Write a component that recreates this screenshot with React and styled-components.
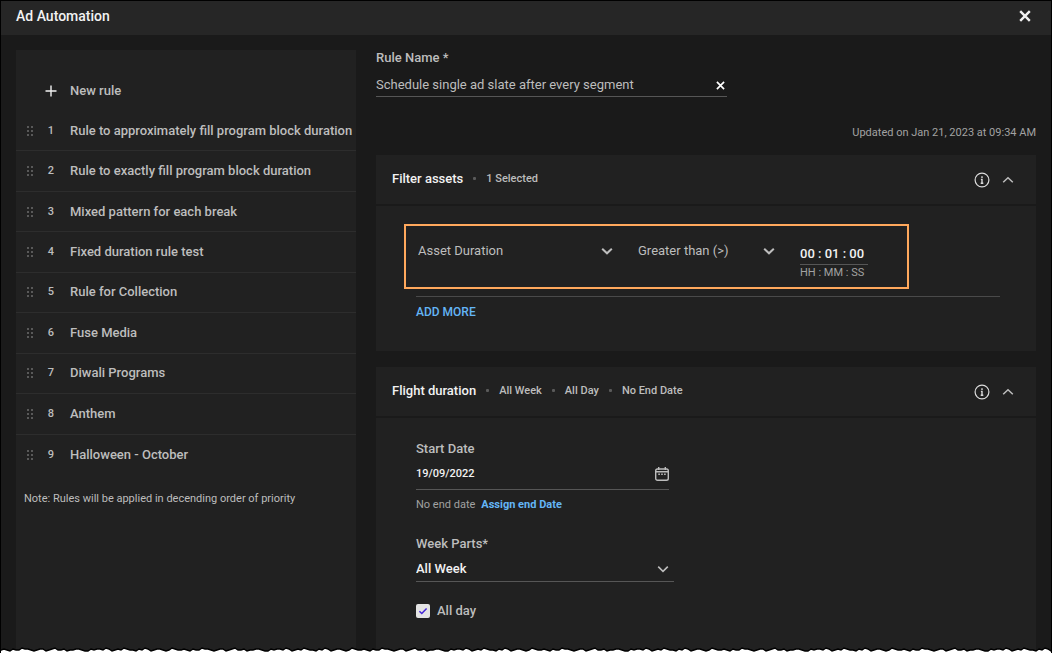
import { useState } from 'react';
import styled, { createGlobalStyle, css } from 'styled-components';

const GlobalStyle = createGlobalStyle`
  :root {
    --color-page: #1a1a1a;
    --color-header: #262626;
    --color-card: #212121;
    --color-line: #2d2d2d;
    --color-underline: #565656;
    --color-white: #f2f2f2;
    --color-text: #bdbdbd;
    --color-muted: #a2a2a2;
    --color-blue: #64b5f6;
    --color-orange: #ffa85c;
  }

  *, *::before, *::after {
    box-sizing: border-box;
    margin: 0;
    padding: 0;
  }

  body {
    background-color: var(--color-page);
    color: var(--color-text);
    font-family: Roboto, 'Liberation Sans', sans-serif;
    font-size: 13px;
    line-height: 16px;
  }

  button, input, select {
    font: inherit;
    color: inherit;
    background: none;
    border: none;
    border-radius: 0;
    outline: none;
  }

  button {
    cursor: pointer;
  }
`;

const rules = [
  'Rule to approximately fill program block duration',
  'Rule to exactly fill program block duration',
  'Mixed pattern for each break',
  'Fixed duration rule test',
  'Rule for Collection',
  'Fuse Media',
  'Diwali Programs',
  'Anthem',
  'Halloween - October',
];

const tear = [
  3, 4, 3, 2, 4, 3, 3, 5, 4, 4, 3, 2, 3, 4, 4, 2, 3, 4, 5, 3, 3, 4, 2, 3, 3, 4,
  4, 3, 2, 2, 4, 3, 4, 4, 3, 5, 4, 2, 3, 4, 3, 5, 4, 3, 3, 2, 4, 3, 5, 4, 2, 3,
  4, 4, 3, 2, 3, 5, 4, 3,
];

const Page = styled.div`
  position: relative;
  min-height: 100vh;
  display: flex;
  flex-direction: column;
  border: 1px solid #000;
  border-bottom: none;
`;

const Header = styled.header`
  height: 34px;
  padding: 0 20px 4px 15px;
  display: flex;
  align-items: center;
  justify-content: space-between;
  background-color: var(--color-header);
`;

const Title = styled.h1`
  color: var(--color-white);
  font-size: 14px;
  font-weight: 500;
`;

const IconButton = styled.button`
  display: flex;
  align-items: center;
  justify-content: center;
  color: ${props => props.$color || 'var(--color-text)'};
`;

const Layout = styled.div`
  flex: 1;
  padding: 15px 15px 0;
  display: flex;
  gap: 20px;
`;

const Sidebar = styled.aside`
  flex: 0 0 340px;
  padding-top: 21px;
  background-color: var(--color-card);
`;

const ruleGrid = css`
  width: 100%;
  display: grid;
  grid-template-columns: 28px 14px 1fr;
  align-items: center;
  justify-items: center;
`;

const NewRule = styled.button`
  ${ruleGrid}
  height: 40px;
  color: var(--color-white);

  svg {
    grid-column: 2;
  }
`;

const RuleList = styled.ol`
  height: 364px;
  display: grid;
  grid-auto-rows: 1fr;
  list-style: none;
`;

const RuleRow = styled.li`
  ${ruleGrid}
  border-bottom: 1px solid var(--color-line);

  &:last-child {
    border-bottom: none;
  }
`;

const RuleNumber = styled.span`
  font-size: 11px;
  font-weight: 500;
`;

const RuleName = styled.span`
  padding-left: 12px;
  justify-self: start;
  color: var(--color-text);
  font-weight: 500;
  white-space: nowrap;
`;

const Note = styled.p`
  padding: 16px 8px;
  font-size: 11px;
`;

const Main = styled.main`
  flex: 1;
  min-width: 0;
  display: flex;
  flex-direction: column;
`;

const Label = styled.label`
  display: block;
  font-weight: 500;
`;

const Field = styled.div`
  width: ${props => props.$width};
  height: ${props => props.$height};
  padding-top: ${props => props.$top || 0};
  display: flex;
  align-items: center;
  justify-content: space-between;
  border-bottom: 1px solid var(--color-underline);
`;

const TextInput = styled.input`
  flex: 1;
  min-width: 0;
  font-size: ${props => props.$size || '13px'};
  font-weight: ${props => props.$weight || 400};
  color: ${props => props.$color || 'var(--color-text)'};
`;

const ClearButton = styled(IconButton)`
  width: 14px;
  height: 14px;
`;

const Updated = styled.p`
  padding: 28px 0 14px;
  color: var(--color-muted);
  font-size: 11px;
  text-align: right;
`;

const Card = styled.section`
  display: flex;
  flex-direction: column;
  flex: ${props => (props.$grow ? 1 : 'none')};
  margin-bottom: ${props => (props.$grow ? 0 : '16px')};
`;

const CardHeader = styled.div`
  height: 49px;
  padding: 0 22px 0 16px;
  display: flex;
  align-items: center;
  gap: 10px;
  background-color: var(--color-card);
`;

const CardTitle = styled.h2`
  padding-bottom: 2px;
  color: var(--color-white);
  font-size: 13px;
  font-weight: 500;
`;

const Tag = styled.span`
  padding-bottom: 2px;
  display: flex;
  align-items: center;
  gap: 10px;
  font-size: 11px;
  font-weight: 500;

  &::before {
    content: '';
    width: 3px;
    height: 3px;
    border-radius: 1px;
    background-color: #5a5a5a;
  }
`;

const Actions = styled.div`
  margin-left: auto;
  display: flex;
  align-items: center;
  gap: 12px;
`;

const CardBody = styled.div`
  flex: 1;
  margin-top: 2px;
  padding: ${props => props.$padding};
  background-color: var(--color-card);
`;

const FilterRow = styled.div`
  max-width: 505px;
  height: 65px;
  padding: 17px 0 0 12px;
  display: flex;
  align-items: flex-start;
  gap: 25px;
  border: 2px solid var(--color-orange);
`;

const SelectBox = styled.div`
  width: ${props => props.$width};
  display: grid;
  align-items: center;

  select, svg {
    grid-area: 1 / 1;
  }

  select {
    width: 100%;
    height: 16px;
    appearance: none;
    font-weight: ${props => props.$weight || 400};
    color: ${props => props.$color || 'var(--color-text)'};
  }

  svg {
    justify-self: end;
    pointer-events: none;
  }
`;

const TimeBox = styled.div`
  width: 68px;
`;

const Hint = styled.span`
  display: block;
  color: var(--color-muted);
  font-size: 11px;
`;

const Divider = styled.hr`
  margin: 7px 24px 7px 12px;
  border: none;
  border-top: 1px solid #4a4a4a;
`;

const LinkButton = styled.button`
  display: block;
  margin-left: ${props => props.$indent || 0};
  color: var(--color-blue);
  font-size: 12px;
  font-weight: 500;
  line-height: 16px;
`;

const EndDate = styled.p`
  padding: 7px 0 23px;
  display: flex;
  gap: 6px;
  color: var(--color-muted);
  font-size: 11px;

  button {
    font-size: 11px;
    font-weight: 700;
  }
`;

const CheckRow = styled.div`
  padding: 21px 0 32px;
  display: flex;
  align-items: center;
  gap: 7px;
`;

const CheckBox = styled.span`
  display: grid;
  place-items: center;

  input, svg {
    grid-area: 1 / 1;
  }

  input {
    width: 14px;
    height: 14px;
    appearance: none;
    border-radius: 2px;
    background-color: #e4e4e4;
  }

  svg {
    pointer-events: none;
  }
`;

const TornEdge = styled.svg`
  position: absolute;
  left: 0;
  bottom: 0;
  width: 100%;
  height: 7px;
`;

function Cross({ size, weight }) {
  return (
    <svg width={size} height={size} viewBox="0 0 12 12" aria-hidden="true">
      <path d="M1.2 1.2 10.8 10.8M10.8 1.2 1.2 10.8" stroke="currentColor" strokeWidth={weight} />
    </svg>
  );
}

function Chevron({ up, width = 12, weight = 2 }) {
  return (
    <svg width={width} height="8" viewBox="0 0 12 8" fill="none" aria-hidden="true">
      <path
        d={up ? 'M1.2 6.3 6 1.7l4.8 4.6' : 'M1.2 1.7 6 6.3l4.8-4.6'}
        stroke="currentColor"
        strokeWidth={weight}
      />
    </svg>
  );
}

function Grip() {
  return (
    <svg width="8" height="12" viewBox="0 0 8 12" fill="#595959" aria-hidden="true">
      {[1, 5, 9].map(y => (
        <g key={y}>
          <rect x="1" y={y} width="2" height="2" />
          <rect x="5" y={y} width="2" height="2" />
        </g>
      ))}
    </svg>
  );
}

function InfoIcon() {
  return (
    <svg width="16" height="16" viewBox="0 0 16 16" fill="none" stroke="currentColor" aria-hidden="true">
      <circle cx="8" cy="8" r="6.9" strokeWidth="1.2" />
      <path d="M8 4.2v1.8M6.9 7.4H8v3.6M6.7 11.2h2.6" strokeWidth="1.4" />
    </svg>
  );
}

function CalendarIcon() {
  return (
    <svg width="14" height="14" viewBox="0 0 14 14" fill="none" stroke="currentColor" aria-hidden="true">
      <rect x="0.7" y="2" width="12.6" height="11.3" rx="1.8" strokeWidth="1.4" />
      <path d="M1 4.8h12M3.7 0v3M10.3 0v3" strokeWidth="1.4" />
      <path d="M3.3 7.3h1.6M6.2 7.3h1.6M9.1 7.3h1.6" strokeWidth="1.6" />
    </svg>
  );
}

function CardHead({ title, tags }) {
  return (
    <CardHeader>
      <CardTitle>{title}</CardTitle>
      {tags.map(tag => (
        <Tag key={tag}>{tag}</Tag>
      ))}
      <Actions>
        <IconButton type="button" aria-label={`About ${title}`} $color="#dcdcdc">
          <InfoIcon />
        </IconButton>
        <IconButton type="button" aria-label={`Collapse ${title}`}>
          <Chevron up weight={1.5} />
        </IconButton>
      </Actions>
    </CardHeader>
  );
}

function Tear() {
  const line = tear.map((h, i) => `L${i * 3} ${7 - h}`).join('');

  return (
    <TornEdge aria-hidden="true">
      <defs>
        <pattern id="tear" width="180" height="7" patternUnits="userSpaceOnUse">
          <path d={`M-3 9${line}L183 4V9Z`} fill="#fff" stroke="#000" strokeWidth="1.4" />
        </pattern>
      </defs>
      <rect width="100%" height="7" fill="url(#tear)" />
    </TornEdge>
  );
}

function App() {
  const [name, setName] = useState('Schedule single ad slate after every segment');
  const [allDay, setAllDay] = useState(true);

  return (
    <>
      <GlobalStyle />
      <Page>
        <Header>
          <Title>Ad Automation</Title>
          <IconButton type="button" aria-label="Close" $color="var(--color-white)">
            <Cross size={12} weight={2.4} />
          </IconButton>
        </Header>
        <Layout>
          <Sidebar>
            <NewRule type="button">
              <svg width="12" height="12" viewBox="0 0 12 12" aria-hidden="true">
                <path d="M6 0.5v11M0.5 6h11" stroke="currentColor" strokeWidth="1.4" />
              </svg>
              <RuleName>New rule</RuleName>
            </NewRule>
            <RuleList>
              {rules.map((rule, i) => (
                <RuleRow key={rule}>
                  <Grip />
                  <RuleNumber>{i + 1}</RuleNumber>
                  <RuleName>{rule}</RuleName>
                </RuleRow>
              ))}
            </RuleList>
            <Note>Note: Rules will be applied in decending order of priority</Note>
          </Sidebar>
          <Main>
            <Label htmlFor="rule-name">Rule Name *</Label>
            <Field $width="351px" $height="31px" $top="8px">
              <TextInput id="rule-name" value={name} onChange={e => setName(e.target.value)} />
              <ClearButton type="button" aria-label="Clear name" $color="#fff" onClick={() => setName('')}>
                <Cross size={9} weight={2.2} />
              </ClearButton>
            </Field>
            <Updated>Updated on Jan 21, 2023 at 09:34 AM</Updated>

            <Card>
              <CardHead title="Filter assets" tags={['1 Selected']} />
              <CardBody $padding="18px 12px 31px 28px">
                <FilterRow>
                  <SelectBox $width="195px">
                    <select aria-label="Filter field">
                      <option>Asset Duration</option>
                    </select>
                    <Chevron />
                  </SelectBox>
                  <SelectBox $width="137px">
                    <select aria-label="Condition">
                      <option>Greater than (&gt;)</option>
                    </select>
                    <Chevron />
                  </SelectBox>
                  <TimeBox>
                    <Field $width="68px" $height="22px">
                      <TextInput
                        id="duration"
                        aria-label="Duration"
                        defaultValue="00 : 01 : 00"
                        $weight={500}
                        $color="var(--color-white)"
                      />
                    </Field>
                    <Hint>HH : MM : SS</Hint>
                  </TimeBox>
                </FilterRow>
                <Divider />
                <LinkButton type="button" $indent="12px">
                  ADD MORE
                </LinkButton>
              </CardBody>
            </Card>

            <Card $grow>
              <CardHead title="Flight duration" tags={['All Week', 'All Day', 'No End Date']} />
              <CardBody $padding="23px 40px 0">
                <Label htmlFor="start-date">Start Date</Label>
                <Field $width="253px" $height="33px" $top="2px">
                  <TextInput
                    id="start-date"
                    defaultValue="19/09/2022"
                    $size="11px"
                    $weight={500}
                    $color="var(--color-white)"
                  />
                  <IconButton type="button" aria-label="Pick a date">
                    <CalendarIcon />
                  </IconButton>
                </Field>
                <EndDate>
                  No end date
                  <LinkButton type="button">Assign end Date</LinkButton>
                </EndDate>
                <Label htmlFor="week-parts">Week Parts*</Label>
                <Field $width="258px" $height="30px" $top="4px">
                  <SelectBox $width="253px" $weight={500} $color="var(--color-white)">
                    <select id="week-parts">
                      <option>All Week</option>
                    </select>
                    <Chevron width={12} weight={1.6} />
                  </SelectBox>
                </Field>
                <CheckRow>
                  <CheckBox>
                    <input
                      id="all-day"
                      type="checkbox"
                      checked={allDay}
                      onChange={e => setAllDay(e.target.checked)}
                    />
                    {allDay && (
                      <svg width="10" height="8" viewBox="0 0 10 8" fill="none" aria-hidden="true">
                        <path d="M1.4 4.2 3.8 6.5 8.6 1.4" stroke="#4527d6" strokeWidth="1.5" />
                      </svg>
                    )}
                  </CheckBox>
                  <Label htmlFor="all-day">All day</Label>
                </CheckRow>
              </CardBody>
            </Card>
          </Main>
        </Layout>
        <Tear />
      </Page>
    </>
  );
}

export default App;
